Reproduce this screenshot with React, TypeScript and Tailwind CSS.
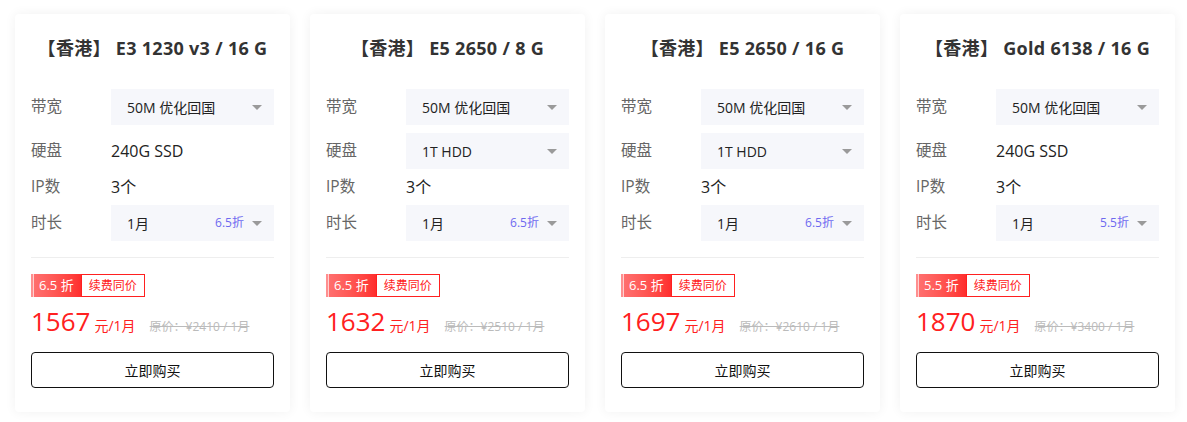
import React from "react";

type Plan = {
  title: string;
  bandwidth: string;
  disk: string;
  diskSelect: boolean;
  ip: string;
  duration: string;
  rate: string;
  price: string;
  original: string;
};

const plans: Plan[] = [
  { title: "【香港】 E3 1230 v3 / 16 G", bandwidth: "50M 优化回国", disk: "240G SSD", diskSelect: false, ip: "3个", duration: "1月", rate: "6.5", price: "1567", original: "2410" },
  { title: "【香港】 E5 2650 / 8 G", bandwidth: "50M 优化回国", disk: "1T HDD", diskSelect: true, ip: "3个", duration: "1月", rate: "6.5", price: "1632", original: "2510" },
  { title: "【香港】 E5 2650 / 16 G", bandwidth: "50M 优化回国", disk: "1T HDD", diskSelect: true, ip: "3个", duration: "1月", rate: "6.5", price: "1697", original: "2610" },
  { title: "【香港】 Gold 6138 / 16 G", bandwidth: "50M 优化回国", disk: "240G SSD", diskSelect: false, ip: "3个", duration: "1月", rate: "5.5", price: "1870", original: "3400" },
];

const Caret = () => (
  <span className="w-0 h-0 border-l-[5px] border-r-[5px] border-t-[5px] border-l-transparent border-r-transparent border-t-[#9a9a9a]" />
);

const Select = ({ value, extra }: { value: string; extra?: string }) => (
  <div className="flex-1 h-9 bg-[#f6f7fb] flex items-center pl-4 pr-3 text-[14px] text-[#222]">
    <span className="flex-1">{value}</span>
    {extra && <span className="text-[12px] text-[#6e6af0] mr-2">{extra}</span>}
    <Caret />
  </div>
);

const Row = ({ label, children, tall = true }: { label: string; children: React.ReactNode; tall?: boolean }) => (
  <div className={`flex items-center ${tall ? "h-9" : "h-5"}`}>
    <span className="w-20 text-[15.5px] text-[#666]">{label}</span>
    {children}
  </div>
);

const Card = ({ p }: { p: Plan }) => (
  <div className="w-[275px] bg-white rounded shadow-[0_0_12px_rgba(0,0,0,0.06)] px-4 pt-5 pb-6">
    <h3 className="text-center text-[18px] tracking-[0.3px] font-bold text-[#333] leading-7">{p.title}</h3>
    <div className="mt-[27px] flex flex-col gap-2">
      <Row label="带宽">
        <Select value={p.bandwidth} />
      </Row>
      <Row label="硬盘">
        {p.diskSelect ? <Select value={p.disk} /> : <span className="text-[16px] text-[#222]">{p.disk}</span>}
      </Row>
      <Row label="IP数" tall={false}>
        <span className="text-[16px] text-[#222]">{p.ip}</span>
      </Row>
      <Row label="时长">
        <Select value={p.duration} extra={`${p.rate}折`} />
      </Row>
    </div>
    <div className="mt-4 border-t border-[#eeeeee]" />
    <div className="mt-4 flex h-[23px]">
      <div className="flex items-center bg-gradient-to-r from-[#ff7272] to-[#ff2d2d] text-white pr-[7px] text-[13px]">
        <span className="w-[2px] h-full bg-[#ff8f8f]" />
        <span className="w-px h-full bg-[#ffd0d0]" />
        <span className="pl-[5px]">{p.rate} 折</span>
      </div>
      <div className="flex items-center border border-[#ff2020] text-[#ff2020] px-[7px] text-[12px]">续费同价</div>
    </div>
    <div className="mt-[6px] flex items-baseline">
      <span className="text-[26px] leading-9 text-[#ff2020]">{p.price}</span>
      <span className="ml-1 text-[14px] text-[#ff2020]">元/1月</span>
      <span className="ml-[14px] text-[12px] text-[#bbbbbb] line-through">原价：¥{p.original} / 1月</span>
    </div>
    <button className="mt-[13px] w-full h-9 border border-[#111] rounded text-[14px] text-[#111] bg-white">立即购买</button>
  </div>
);

export default function App() {
  return (
    <div className="w-[1187px] h-[422px] bg-white pt-[14px] pl-[15px] flex items-start gap-5 font-['Open_Sans','Noto_Sans_CJK_SC',sans-serif]">
      {plans.map((p) => (
        <Card key={p.title} p={p} />
      ))}
    </div>
  );
}
